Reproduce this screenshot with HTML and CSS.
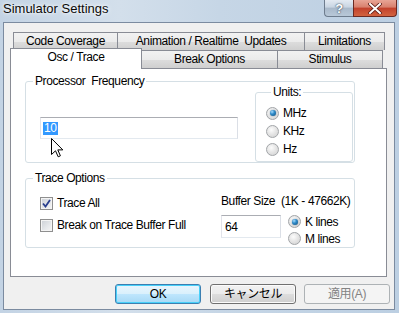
FILE: index.html
```html
<!DOCTYPE html>
<html lang="ja">
<head>
  <meta charset="UTF-8">
  <title>Simulator Settings</title>
  <link rel="stylesheet" href="styles.css">
</head>
<body>
  <div class="window">
    <!-- タイトルバー -->
    <div class="titlebar">
      <span class="title">Simulator Settings</span>
      <div class="caption-btns">
        <span class="cap help">?</span>
        <span class="cap close">
          <svg width="14" height="11" viewBox="0 0 14 11">
            <path d="M2 1 L12 10 M12 1 L2 10" stroke="#5a1a14" stroke-width="3.6" stroke-linecap="square"/>
            <path d="M2 1 L12 10 M12 1 L2 10" stroke="#fff" stroke-width="2" stroke-linecap="square"/>
          </svg>
        </span>
      </div>
    </div>

    <div class="client">
      <div class="tabs">
        <div class="tab-row back">
          <div class="tab t-code">Code Coverage</div>
          <div class="tab t-anim">Animation / Realtime&nbsp; Updates</div>
          <div class="tab t-limit">Limitations</div>
        </div>
        <div class="tab-row front">
          <div class="tab t-osc active">Osc / Trace</div>
          <div class="tab t-break">Break Options</div>
          <div class="tab t-stim">Stimulus</div>
        </div>
      </div>

      <div class="panel">
        <fieldset class="group freq">
          <legend>Processor&nbsp; Frequency</legend>
          <div class="freq-body">
            <div class="textbox wide"><span class="sel">10</span></div>
            <fieldset class="group units">
              <legend>Units:</legend>
              <div class="radio-row"><span class="radio on"></span>MHz</div>
              <div class="radio-row"><span class="radio"></span>KHz</div>
              <div class="radio-row"><span class="radio"></span>Hz</div>
            </fieldset>
          </div>
        </fieldset>

        <fieldset class="group trace">
          <legend>Trace Options</legend>
          <div class="trace-body">
            <div class="checks">
              <div class="check-row">
                <span class="checkbox on">
                  <svg width="9" height="9" viewBox="0 0 9 9"><path d="M1 4.5 L3.5 7.5 L8 1" fill="none" stroke="#2a3f8e" stroke-width="1.8"/></svg>
                </span>Trace All
              </div>
              <div class="check-row"><span class="checkbox"></span>Break on Trace Buffer Full</div>
            </div>
            <div class="buffer">
              <div class="buffer-label">Buffer Size&nbsp; (1K - 47662K)</div>
              <div class="buffer-row">
                <div class="textbox small">64</div>
                <div class="buffer-units">
                  <div class="radio-row tight"><span class="radio on"></span>K lines</div>
                  <div class="radio-row tight"><span class="radio"></span>M lines</div>
                </div>
              </div>
            </div>
          </div>
        </fieldset>
      </div>

      <div class="buttons">
        <div class="btn default">OK</div>
        <div class="btn">キャンセル</div>
        <div class="btn disabled">適用(A)</div>
      </div>
    </div>

    <!-- マウスカーソル -->
    <svg class="cursor" width="13" height="20" viewBox="0 0 13 20">
      <path d="M0.5 0.5 L0.5 16.5 L4.5 12.8 L7.2 18.8 L9.4 17.8 L6.8 11.9 L11.8 11.9 Z" fill="#fff" stroke="#000" stroke-width="1" stroke-linejoin="miter"/>
    </svg>
  </div>
</body>
</html>
```

FILE: styles.css
```css
html, body {
  margin: 0;
  padding: 0;
}
body {
  width: 399px;
  height: 313px;
  overflow: hidden;
  font-family: "Liberation Sans", "Noto Sans CJK JP", sans-serif;
  font-size: 12px;
  letter-spacing: -0.4px;
  color: #000;
}
.window {
  position: relative;
  width: 399px;
  height: 313px;
  box-sizing: border-box;
  padding: 0 4px 3px 3px;
  display: flex;
  flex-direction: column;
  background: linear-gradient(90deg, #c3d3e4 0%, #d3dfeb 30%, #c6d6e6 55%, #bccfe2 100%);
}
.titlebar {
  height: 22px;
  display: flex;
  align-items: flex-start;
}
.title {
  font-size: 13px;
  letter-spacing: 0;
  line-height: 16px;
  padding: 1px 0 0 0;
  color: #0a0a0a;
  text-shadow: 0 0 6px #fff, 0 0 3px #fff;
}
.caption-btns {
  margin-left: auto;
  display: flex;
  margin-right: -2px;
}
.cap {
  height: 17px;
  box-sizing: border-box;
  display: flex;
  align-items: center;
  justify-content: center;
  border: 1px solid #6d7c8d;
  border-top: none;
}
.help {
  width: 29px;
  border-radius: 0 0 0 4px;
  border-right: none;
  background: linear-gradient(180deg, #e3eaf2 0%, #c9d5e2 45%, #a9b9ca 50%, #b8c8d8 100%);
  color: #fff;
  font-weight: bold;
  font-size: 13px;
  text-shadow: 0 0 2px #3b4b5d, 0 0 1px #3b4b5d;
}
.close {
  width: 44px;
  border-radius: 0 0 4px 0;
  border-color: #6b2a22;
  background: linear-gradient(180deg, #e8a596 0%, #d8806d 45%, #c2412c 50%, #d2633f 100%);
}
.client {
  flex: 1;
  background: #f0f0f0;
  border: 1px solid #7b8ba0;
  padding: 9px 7px 0 6px;
  display: flex;
  flex-direction: column;
}
.tab-row {
  display: flex;
}
.tab-row.back {
  margin-left: 3px;
}
.tab-row.front {
  align-items: flex-end;
}
.tab {
  flex: none;
  height: 18px;
  box-sizing: border-box;
  line-height: 17px;
  text-align: center;
  white-space: nowrap;
  border: 1px solid #898c95;
  border-bottom: none;
  border-right: none;
  background: linear-gradient(180deg, #f2f2f2 0%, #ebebeb 50%, #dddddd 51%, #cfcfcf 100%);
}
.tab.t-limit, .tab.t-stim {
  border-right: 1px solid #898c95;
}
.t-code { width: 104px; }
.t-anim { width: 187px; }
.t-limit { width: 81px; }
.t-osc { width: 132px; }
.t-break { width: 136px; }
.t-stim { width: 106px; }
.tab.active {
  position: relative;
  z-index: 2;
  height: 21px;
  margin-top: -2px;
  margin-bottom: -1px;
  line-height: 17px;
  background: #fff;
  border-right: 1px solid #898c95;
  margin-right: -1px;
}
.panel {
  width: 377px;
  height: 209px;
  box-sizing: border-box;
  border: 1px solid #898c95;
  background: #fff;
  padding: 5px 0 0 14px;
}
.group {
  margin: 0;
  padding: 0;
  border: 1px solid #d5dfe5;
  border-radius: 3px;
  min-width: 0;
}
.group legend {
  padding: 0 2px;
  margin-left: 7px;
  line-height: 14px;
}
.freq {
  width: 330px;
  box-sizing: border-box;
}
.freq-body {
  display: flex;
  align-items: flex-start;
}
.textbox {
  flex: none;
  box-sizing: border-box;
  background: #fff;
  border: 1px solid;
  border-color: #abadb3 #dbdfe6 #e3e9ef #e2e3ea;
  line-height: 18px;
}
.textbox.wide {
  width: 198px;
  height: 22px;
  margin: 29px 0 0 14px;
  padding: 1px 2px;
}
.sel {
  display: inline-block;
  background: #3399ff;
  color: #fff;
  line-height: 13px;
  padding: 0 1px;
  margin-top: 1px;
}
.units {
  flex: none;
  width: 98px;
  height: 77px;
  box-sizing: border-box;
  margin: -3px -1px 0 17px;
  padding: 5px 0 0 10px;
}
.units legend {
  margin-left: 5px;
}
.radio-row {
  display: flex;
  align-items: center;
  height: 18px;
  white-space: nowrap;
}
.radio-row.tight {
  height: 17px;
}
.radio {
  flex: none;
  width: 11px;
  height: 11px;
  border-radius: 50%;
  border: 1px solid #a2a5a8;
  margin-right: 4px;
  background: radial-gradient(circle at 40% 35%, #fcfcfc 0%, #e6e6e6 45%, #cfcfcf 100%);
  display: flex;
  align-items: center;
  justify-content: center;
}
.radio.on::after {
  content: "";
  width: 6px;
  height: 6px;
  border-radius: 50%;
  background: radial-gradient(circle at 35% 30%, #a6dcff 0%, #2f8bc9 40%, #0f4f7e 100%);
  box-shadow: 0 0 1px #0d3a5c;
}
.trace {
  width: 330px;
  box-sizing: border-box;
  margin-top: 8px;
}
.trace-body {
  height: 62px;
  display: flex;
}
.checks {
  flex: none;
  width: 181px;
  padding: 7px 0 0 14px;
}
.check-row {
  display: flex;
  align-items: center;
  height: 22px;
  white-space: nowrap;
}
.checkbox {
  flex: none;
  width: 13px;
  height: 13px;
  box-sizing: border-box;
  border: 1px solid #8f8f8f;
  margin-right: 4px;
  background: linear-gradient(135deg, #cbcfd5 0%, #e6e8eb 60%, #f6f6f6 100%);
  box-shadow: inset 0 0 0 1px #f4f4f4;
  display: flex;
  align-items: center;
  justify-content: center;
}
.buffer {
  flex: none;
  padding-top: 9px;
}
.buffer-label {
  line-height: 14px;
  margin-bottom: 5px;
  white-space: nowrap;
}
.buffer-row {
  display: flex;
  align-items: flex-start;
}
.textbox.small {
  width: 60px;
  height: 23px;
  margin-top: 2px;
  padding: 2px 3px;
}
.buffer-units {
  margin-left: 7px;
}
.buttons {
  display: flex;
  justify-content: flex-end;
  margin: 7px -3px 0 0;
}
.btn {
  width: 86px;
  height: 20px;
  box-sizing: border-box;
  border: 1px solid #707070;
  border-radius: 3px;
  text-align: center;
  line-height: 18px;
  margin-left: 8px;
  background: linear-gradient(180deg, #f2f2f2 0%, #ebebeb 50%, #dddddd 51%, #cfcfcf 100%);
  box-shadow: inset 0 0 0 1px #fbfbfb;
}
.btn.default {
  border-color: #3c7fb1;
  background: linear-gradient(180deg, #eaf6fd 0%, #d9f0fc 50%, #bee6fd 51%, #a7d9f5 100%);
  box-shadow: inset 0 0 0 1px #48d0f9;
  margin-right: 1px;
}
.btn.disabled {
  border-color: #adb2b5;
  background: #f4f4f4;
  color: #838383;
  box-shadow: none;
}
.cursor {
  position: absolute;
  left: 51px;
  top: 138px;
}
```
